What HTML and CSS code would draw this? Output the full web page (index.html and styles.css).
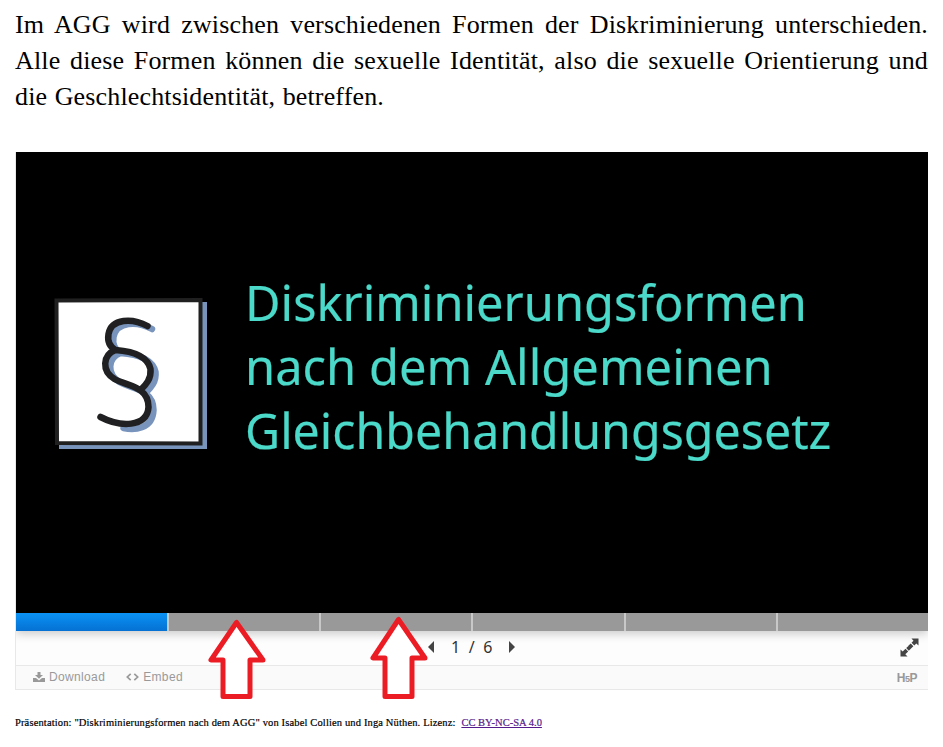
FILE: index.html
```html
<!DOCTYPE html>
<html lang="de">
<head>
<meta charset="utf-8">
<title>Diskriminierungsformen nach dem AGG</title>
<link rel="stylesheet" href="styles.css">
</head>
<body>
<main class="page">
  <p class="intro"><span class="l1">Im AGG wird zwischen verschiedenen Formen der Diskriminierung unterschieden.</span> <span class="l2">Alle diese Formen können die sexuelle Identität, also die sexuelle Orientierung und</span> <span class="l3">die Geschlechtsidentität, betreffen.</span></p>
  <section class="player">
    <div class="slide">
      <svg class="symbol" width="156" height="156" viewBox="0 0 156 156" aria-hidden="true">
        <path d="M6 149.500H151.500V5" fill="none" stroke="#7894bd" stroke-width="5"/>
        <path d="M3.500 3.500L147.500 3V146.500L4 146Z" fill="#fff" stroke="#202020" stroke-width="4"/>
        <g transform="translate(1.500 -1)" fill="none" stroke-linecap="round" stroke-linejoin="round" stroke-width="6.500">
          <path transform="translate(5 3)" stroke="#7894bd" d="M92.500 30C78 22 57 22 54 38C53 44 54 50 61 54C74 55 93 59 96 73C97 83 91 89 87 93M61 54C48 59 47 75 60 83C72 90 94 90 94 111C93 131 74 131 64 129"/>
          <path stroke="#202022" d="M93 30C78 22 57 22 54 38C53 44 54 50 61 54C74 55 93 59 96 73C97 83 91 89 87 93M61 54C48 59 47 75 60 83C72 90 94 90 94 111C93 132 65 131 46 121"/>
        </g>
      </svg>
      <h1 class="title"><span class="t1">Diskriminierungsformen</span><span class="t2">nach dem Allgemeinen</span><span class="t3">Gleichbehandlungsgesetz</span></h1>
    </div>
    <div class="progress"><i class="done"></i><i></i><i></i><i></i><i></i><i></i></div>
    <div class="controls">
      <svg class="prev" width="6" height="12" viewBox="0 0 6 12"><path d="M6 0V12L0 6Z" fill="#444"/></svg>
      <span class="count">1 / 6</span>
      <svg class="next" width="6" height="12" viewBox="0 0 6 12"><path d="M0 0V12L6 6Z" fill="#444"/></svg>
      <svg class="full" width="19" height="19" viewBox="0 0 19 19"><path d="M11.500 .5H18.500V7.500L16.300 5.500L14.300 7.400L11.500 4.700L13.500 2.700ZM10.700 5.500L13.400 8.200L11 10.500L8.300 7.800ZM.5 18.500V11.500L2.700 13.500L5.500 10.800L8.200 13.500L5.300 16.300L7.500 18.500ZM6.200 10L8.700 7.700L11.300 10.300L8.800 12.700Z" fill="#444"/></svg>
    </div>
    <div class="actions">
      <svg class="dl" width="12" height="10" viewBox="0 0 12 10"><path d="M4.500 0H7.500V3H10L6 6.700L2 3H4.500ZM0 6H3L6 8.500L9 6H12V10H0Z" fill="#999"/></svg>
      <span class="download">Download</span>
      <svg class="code" width="13" height="8" viewBox="0 0 13 8"><path d="M4.700 .8L1.300 4L4.700 7.200M8.300 .8L11.700 4L8.300 7.200" fill="none" stroke="#999" stroke-width="1.700"/></svg>
      <span class="embed">Embed</span>
      <span class="logo">H<span class="five">5</span>P</span>
    </div>
  </section>
  <p class="credit">Präsentation: "Diskriminierungsformen nach dem AGG" von Isabel Collien und Inga Nüthen. Lizenz: <a href="#">CC BY-NC-SA 4.0</a></p>
  <svg class="arrow arrow-a" width="58" height="81" viewBox="0 0 58 81"><path d="M28.500 3.500L3 41H15V77.500H42V41H55Z"/></svg>
  <svg class="arrow arrow-b" width="58" height="84" viewBox="0 0 58 84"><path d="M28.500 3.500L3 42H15V80.500H42V42H55Z"/></svg>
</main>
</body>
</html>
```
FILE: styles.css
```css
* { box-sizing: border-box; }
body { margin: 0; background: #fff; color: #000; }
.page { position: relative; width: 943px; height: 747px; padding: 7px 15px 0; overflow: hidden; }
.intro { margin: 0; height: 145px; font: 26px/36px "Liberation Serif", serif; }
.intro span { display: block; width: 913px; white-space: nowrap; text-align: justify; text-align-last: justify; letter-spacing: .15px; }
.intro .l3 { width: 369px; }
.player { width: 913px; height: 538px; border: 1px solid #e8e8e8; border-width: 0 0 1px 1px; }
.slide { display: flex; height: 461px; background: #000; }
.symbol { flex: none; margin: 145px 0 0 37px; }
.title { margin: 118px 0 0 36px; font: 400 50px/64px "Noto Sans", sans-serif; color: #4bd9c9; -webkit-text-stroke: .2px #4bd9c9; }
.title span { display: block; white-space: nowrap; transform: scaleX(.975); transform-origin: 0 0; }
.title .t2 { transform: scaleX(.977); }
.title .t3 { transform: scaleX(.966); }
.progress { display: flex; height: 18px; position: relative; box-shadow: 0 3px 10px rgba(0,0,0,.2); clip-path: inset(0 0 -18px 0); }
.progress i { flex: 1; background: #999; border-right: 2px solid #c8c8c8; }
.progress i:last-child { border-right: 0; }
.progress .done { flex: 0 0 153px; background: linear-gradient(#0b92f5, #0571d3) padding-box; }
.controls { display: flex; align-items: center; height: 34px; padding: 0 9px 2px 412px; background: #fdfdfd; }
.count { width: 43px; margin: 0 15px 0 17px; font: 16px/20px "Noto Sans", sans-serif; color: #333; white-space: pre; letter-spacing: 2.2px; }
.full { margin-left: auto; }
.actions { display: flex; align-items: center; height: 24px; padding: 0 11px 2px 17px; border-top: 1px solid #e8e8e8; background: #fafafa; font: 12px/16px "Liberation Sans", sans-serif; color: #999; letter-spacing: .35px; }
.download { margin: 0 21px 0 4px; }
.embed { margin-left: 4px; }
.logo { margin: 4px 0 0 auto; font-weight: 700; font-size: 12px; letter-spacing: -.5px; }
.five { font-size: 9px; }
.credit { margin: 25px 0 0; font: 10.5px/15px "Liberation Serif", serif; letter-spacing: .14px; white-space: nowrap; -webkit-text-stroke: .2px; }
.credit a { color: #551a8b; letter-spacing: .02px; margin-left: 3px; }
.arrow { position: absolute; fill: #fff; stroke: #ec1c24; stroke-width: 5; stroke-linejoin: round; }
.arrow-a { left: 208px; top: 619px; }
.arrow-b { left: 370px; top: 616px; }
```
